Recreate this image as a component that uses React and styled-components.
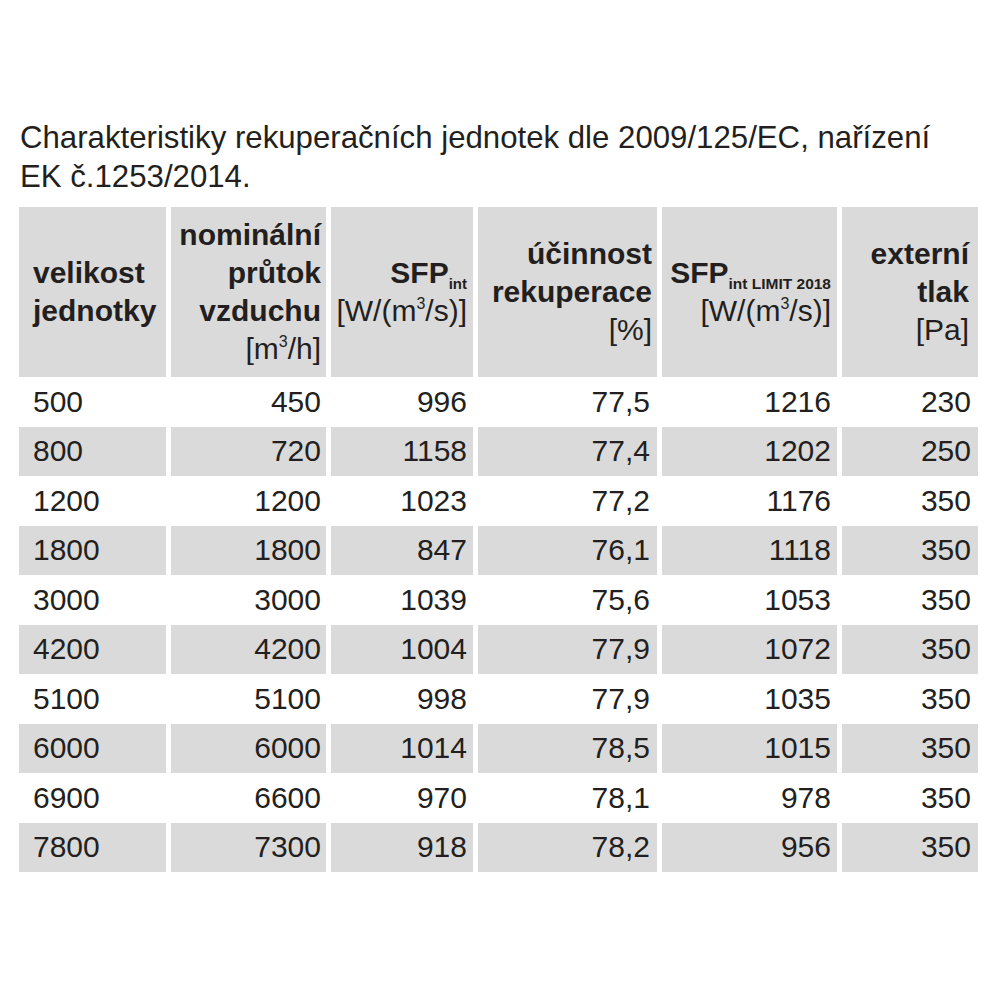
import React from 'react';
import styled, { createGlobalStyle } from 'styled-components';

const GlobalStyle = createGlobalStyle`
  html, body {
    margin: 0;
    padding: 0;
    background: #ffffff;
  }
  body {
    font-family: "Liberation Sans", Arial, Helvetica, sans-serif;
    color: #231f20;
  }
`

const Page = styled.div`
  width: 1000px;
  height: 1000px;
  padding: 118px 0 0 20px;
  box-sizing: border-box;
`

const Title = styled.h1`
  margin: 0 0 11px 0;
  font-size: 31.2px;
  font-weight: 400;
  line-height: 39px;
  white-space: nowrap;
  color: #231f20;
`

const Table = styled.table`
  margin-left: -6px;
  border-collapse: separate;
  border-spacing: 5px 0;
  table-layout: fixed;
  width: 969px;
  font-size: 30px;
`

const HeadCell = styled.th`
  height: 170px;
  padding: 0 ${p => p.$pr || 5}px 0 ${p => (p.$left ? 14 : 4)}px;
  background: #dadada;
  text-align: ${p => (p.$left ? 'left' : 'right')};
  vertical-align: middle;
  font-weight: 700;
  line-height: 38px;
  box-sizing: border-box;
`

const Unit = styled.span`
  display: block;
  font-weight: 400;
`

const Line = styled.span`
  display: block;
  white-space: nowrap;
`

const Sub = styled.span`
  font-size: ${p => p.$size || 15}px;
  font-weight: 700;
  line-height: 0;
  vertical-align: -6px;
  letter-spacing: ${p => p.$ls || 0}px;
`

const Sup = styled.span`
  font-size: 16px;
  line-height: 0;
  vertical-align: 12px;
`

const Row = styled.tr`
  height: 49.5px;
`

const Cell = styled.td`
  height: 49.5px;
  padding: 0 ${p => p.$pr || 6}px 0 ${p => (p.$left ? 14 : 4)}px;
  background: ${p => (p.$shaded ? '#dadada' : 'transparent')};
  text-align: ${p => (p.$left ? 'left' : 'right')};
  vertical-align: middle;
  font-weight: 400;
  line-height: 34px;
  box-sizing: border-box;
  white-space: nowrap;
`

const rows = [
  ['500', '450', '996', '77,5', '1216', '230'],
  ['800', '720', '1158', '77,4', '1202', '250'],
  ['1200', '1200', '1023', '77,2', '1176', '350'],
  ['1800', '1800', '847', '76,1', '1118', '350'],
  ['3000', '3000', '1039', '75,6', '1053', '350'],
  ['4200', '4200', '1004', '77,9', '1072', '350'],
  ['5100', '5100', '998', '77,9', '1035', '350'],
  ['6000', '6000', '1014', '78,5', '1015', '350'],
  ['6900', '6600', '970', '78,1', '978', '350'],
  ['7800', '7300', '918', '78,2', '956', '350'],
];

const widths = [147, 155, 142, 179, 175, 136];
const rightPad = [6, 5, 6, 7, 6, 7];

export default function App() {
  return (
    <Page>
      <GlobalStyle />
      <Title>
        Charakteristiky rekuperačních jednotek dle 2009/125/EC, nařízení
        <br />
        EK č.1253/2014.
      </Title>
      <Table>
        <colgroup>
          {widths.map((w, i) => (
            <col key={i} style={{ width: w }} />
          ))}
        </colgroup>
        <thead>
          <tr>
            <HeadCell $left>
              <Line>velikost</Line>
              <Line>jednotky</Line>
            </HeadCell>
            <HeadCell>
              <Line>nominální</Line>
              <Line>průtok</Line>
              <Line>vzduchu</Line>
              <Unit>[m<Sup>3</Sup>/h]</Unit>
            </HeadCell>
            <HeadCell $pr={6}>
              <Line>SFP<Sub>int</Sub></Line>
              <Unit>[W/(m<Sup>3</Sup>/s)]</Unit>
            </HeadCell>
            <HeadCell>
              <Line>účinnost</Line>
              <Line>rekuperace</Line>
              <Unit>[%]</Unit>
            </HeadCell>
            <HeadCell $pr={6}>
              <Line>SFP<Sub $size={15.5}>int LIMIT 2018</Sub></Line>
              <Unit>[W/(m<Sup>3</Sup>/s)]</Unit>
            </HeadCell>
            <HeadCell $pr={9}>
              <Line>externí</Line>
              <Line>tlak</Line>
              <Unit>[Pa]</Unit>
            </HeadCell>
          </tr>
        </thead>
        <tbody>
          {rows.map((r, i) => (
            <Row key={r[0]}>
              {r.map((v, j) => (
                <Cell key={j} $left={j === 0} $shaded={i % 2 === 1} $pr={rightPad[j]}>
                  {v}
                </Cell>
              ))}
            </Row>
          ))}
        </tbody>
      </Table>
    </Page>
  );
}
